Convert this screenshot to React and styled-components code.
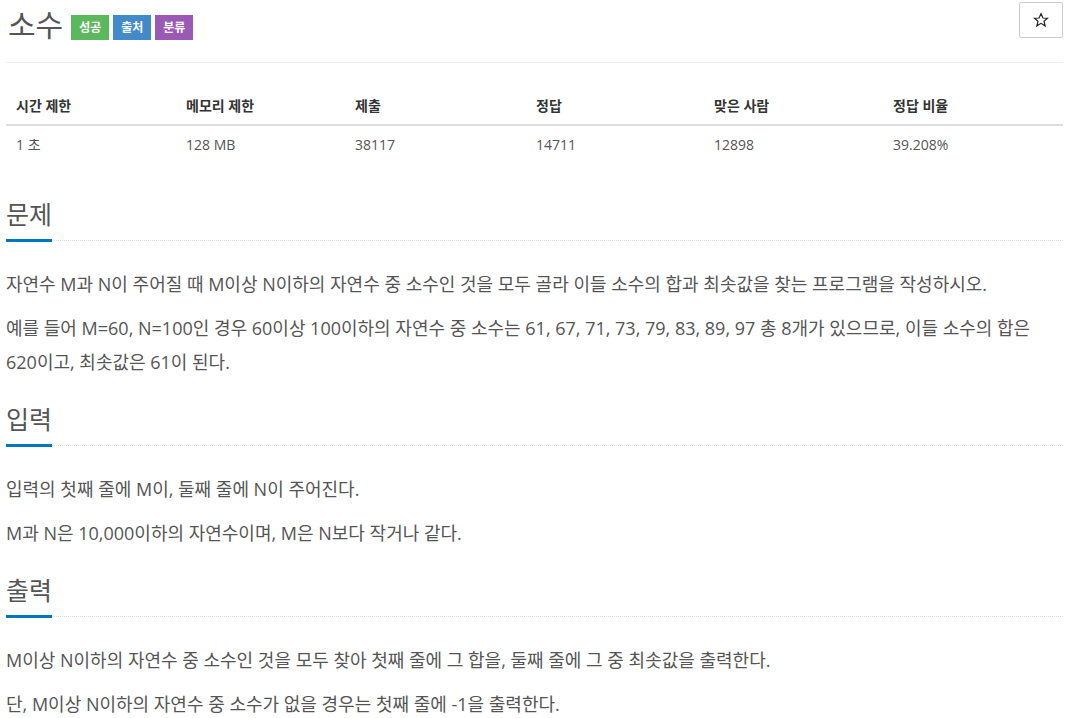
import React from "react";
import styled, { createGlobalStyle } from "styled-components";

const Global = createGlobalStyle`
  body {
    margin: 0;
    background: #fff;
    font-family: "Open Sans", "Noto Sans CJK KR", sans-serif;
    color: #555;
  }
`;

const Page = styled.div`
  padding: 0 7px 0 6px;
`;

const Header = styled.div`
  display: flex;
  align-items: flex-start;
  justify-content: space-between;
  border-bottom: 1px solid #eee;
  height: 62px;
`;

const Title = styled.div`
  display: flex;
  align-items: center;
  padding-top: 6px;
  padding-left: 2px;
`;

const TitleText = styled.span`
  font-size: 30px;
  color: #555;
  line-height: 38px;
  margin-right: 8px;
`;

const Badge = styled.span`
  display: inline-block;
  background: ${(p) => p.bg};
  color: #fff;
  font-size: 12px;
  font-weight: 700;
  width: 38px;
  height: 25px;
  line-height: 25px;
  text-align: center;
  margin-right: 4px;
  margin-top: 4px;
`;

const StarButton = styled.button`
  margin-top: 2px;
  width: 44px;
  height: 36px;
  border: 1px solid #ccc;
  background: #fff;
  border-radius: 2px;
  padding: 0;
  display: flex;
  align-items: center;
  justify-content: center;
`;

const cols = "170px 169px 181px 178px 179px 1fr";

const Table = styled.div`
  margin-top: 25px;
  display: grid;
  grid-template-columns: ${cols};
`;

const Th = styled.div`
  font-size: 14px;
  font-weight: 700;
  color: #333;
  padding: 8px 10px;
  line-height: 20px;
  border-bottom: 2px solid #ddd;
`;

const Td = styled.div`
  font-size: 14px;
  color: #555;
  padding: 8px 10px;
  line-height: 22px;
`;

const Section = styled.section`
  margin-top: ${(p) => p.top}px;
`;

const Headline = styled.div`
  border-bottom: 1px dotted #ddd;
`;

const H2 = styled.h2`
  display: inline-block;
  margin: 0 0 -2px;
  font-size: 25px;
  font-weight: 400;
  color: #555;
  line-height: 32px;
  padding-bottom: 9px;
  border-bottom: 3px solid #0076c0;
`;

const Body = styled.div`
  padding-top: 26px;
`;

const P = styled.p`
  margin: 0 0 10px;
  font-size: 18px;
  line-height: 34px;
  color: #555;
`;

const stats = [
  ["시간 제한", "1 초"],
  ["메모리 제한", "128 MB"],
  ["제출", "38117"],
  ["정답", "14711"],
  ["맞은 사람", "12898"],
  ["정답 비율", "39.208%"],
];

const Star = () => (
  <svg width="16" height="16" viewBox="0 0 24 24">
    <polygon
      points="12,2.5 14.9,9 21.8,9.4 16.5,13.9 18.2,20.8 12,17 5.8,20.8 7.5,13.9 2.2,9.4 9.1,9"
      fill="none"
      stroke="#222"
      strokeWidth="1.8"
      strokeLinejoin="miter"
    />
  </svg>
);

export default function App() {
  return (
    <Page>
      <Global />
      <Header>
        <Title>
          <TitleText>소수</TitleText>
          <Badge bg="#5cb85c">성공</Badge>
          <Badge bg="#428bca">출처</Badge>
          <Badge bg="#9b59b6">분류</Badge>
        </Title>
        <StarButton>
          <Star />
        </StarButton>
      </Header>

      <Table>
        {stats.map(([h]) => (
          <Th key={h}>{h}</Th>
        ))}
        {stats.map(([h, v]) => (
          <Td key={h}>{v}</Td>
        ))}
      </Table>

      <Section top={34}>
        <Headline>
          <H2>문제</H2>
        </Headline>
        <Body>
          <P>
            자연수 M과 N이 주어질 때 M이상 N이하의 자연수 중 소수인 것을 모두 골라 이들 소수의 합과 최솟값을 찾는 프로그램을 작성하시오.
          </P>
          <P>
            예를 들어 M=60, N=100인 경우 60이상 100이하의 자연수 중 소수는 61, 67, 71, 73, 79, 83, 89, 97 총 8개가 있으므로, 이들 소수의 합은 620이고, 최솟값은 61이 된다.
          </P>
        </Body>
      </Section>

      <Section top={24}>
        <Headline>
          <H2>입력</H2>
        </Headline>
        <Body>
          <P>입력의 첫째 줄에 M이, 둘째 줄에 N이 주어진다.</P>
          <P>M과 N은 10,000이하의 자연수이며, M은 N보다 작거나 같다.</P>
        </Body>
      </Section>

      <Section top={24}>
        <Headline>
          <H2>출력</H2>
        </Headline>
        <Body>
          <P>M이상 N이하의 자연수 중 소수인 것을 모두 찾아 첫째 줄에 그 합을, 둘째 줄에 그 중 최솟값을 출력한다.</P>
          <P>단, M이상 N이하의 자연수 중 소수가 없을 경우는 첫째 줄에 -1을 출력한다.</P>
        </Body>
      </Section>
    </Page>
  );
}
